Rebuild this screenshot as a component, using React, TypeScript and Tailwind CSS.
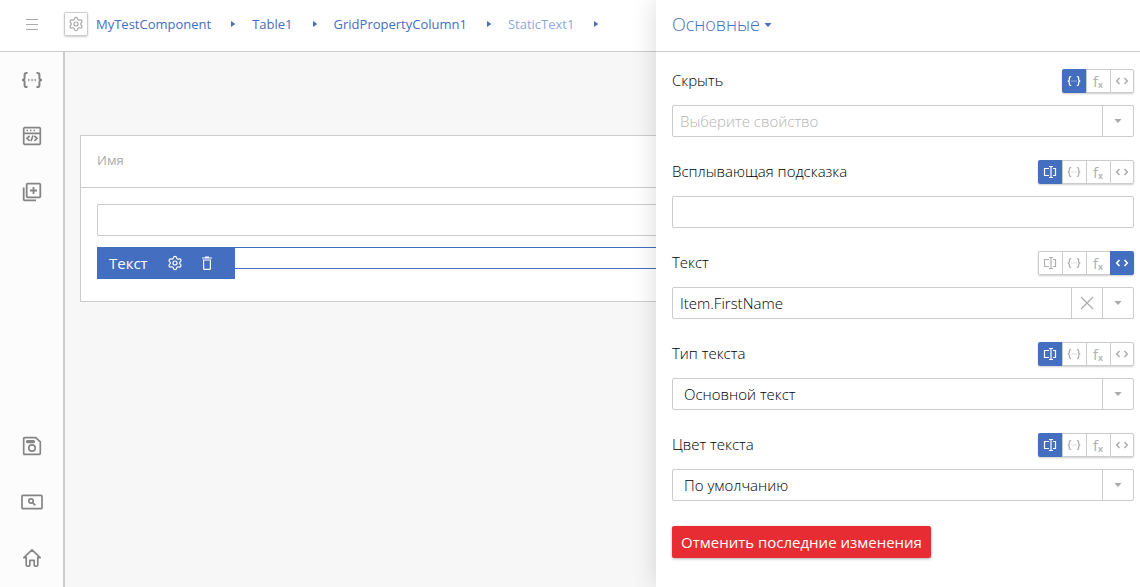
import { type ReactNode } from 'react';
import { Settings } from 'lucide-react';

type Mode = 'value' | 'property' | 'function' | 'code';

function BracesIcon({ className }: { className: string }) {
  return (
    <svg viewBox="0 0 22 16" className={className} fill="none" stroke="currentColor" strokeWidth="2" aria-hidden="true">
      <path d="M6.5 1H5.4Q3.6 1 3.6 2.8v2.9Q3.6 8 1 8q2.6 0 2.6 2.3v2.9Q3.6 15 5.4 15h1.1" />
      <path d="M15.5 1h1.1q1.8 0 1.8 1.8v2.9Q18.4 8 21 8q-2.6 0-2.6 2.3v2.9q0 1.8-1.8 1.8h-1.1" />
      <path d="M7 8h1.5M10.300 8h1.500M13.500 8H15" strokeWidth="1.400" />
    </svg>
  );
}

function ValueIcon() {
  return (
    <svg viewBox="0 0 14 14" className="h-3.5 w-3.5" fill="none" stroke="currentColor" strokeWidth="1.200" aria-hidden="true">
      <path d="M6 3.5H1.500v7H6M10 3.5h2.500v7H10" />
      <path d="M6 1.500h4M6 12.500h4M8 1.500v11" />
    </svg>
  );
}

function CodeIcon() {
  return (
    <svg viewBox="0 0 14 8" className="h-2 w-3.5" fill="none" stroke="currentColor" strokeWidth="1.600" aria-hidden="true">
      <path d="M4.500 1 1.700 4l2.800 3M9.500 1l2.800 3-2.800 3" />
    </svg>
  );
}

function FunctionIcon() {
  return (
    <span className="flex items-end leading-none font-normal">
      <span className="text-[15px] leading-none">f</span>
      <span className="text-[9px] leading-none font-semibold">x</span>
    </span>
  );
}

const modes: { id: Mode; title: string; icon: ReactNode }[] = [
  { id: 'value', title: 'Значение', icon: <ValueIcon /> },
  { id: 'property', title: 'Свойство', icon: <BracesIcon className="h-2.5 w-3.5" /> },
  { id: 'function', title: 'Функция', icon: <FunctionIcon /> },
  { id: 'code', title: 'Выражение', icon: <CodeIcon /> },
];

function ModeSwitch({ active, withValue = true }: { active: Mode; withValue?: boolean }) {
  return (
    <div role="group" className="flex rounded-[2px] shadow-[0_1px_2px_rgba(0,0,0,0.2)]">
      {modes
        .filter((m) => withValue || m.id !== 'value')
        .map((m) => (
          <button
            key={m.id}
            type="button"
            aria-label={m.title}
            aria-pressed={m.id === active}
            className={
              m.id === active
                ? 'flex h-6 w-6 items-center justify-center bg-[#446ebf] text-white first:rounded-l-[2px] last:rounded-r-[2px]'
                : 'flex h-6 w-6 items-center justify-center border-y border-l border-[#ccc] bg-white pr-px text-[#b0b0b0] first:rounded-l-[2px] last:rounded-r-[2px] last:border-r last:pr-0'
            }
          >
            {m.icon}
          </button>
        ))}
    </div>
  );
}

function DownArrow() {
  return (
    <svg viewBox="0 0 8 4" className="h-1 w-2" fill="currentColor" aria-hidden="true">
      <path d="M0.500 0h7L4.600 3.500q-.6.600-1.200 0z" />
    </svg>
  );
}

function Field({ id, label, active, withValue, children }: {
  id: string;
  label: string;
  active: Mode;
  withValue?: boolean;
  children: ReactNode;
}) {
  return (
    <div className="flex flex-col gap-3">
      <div className="flex h-6 items-center justify-between">
        <label htmlFor={id} className="pb-0.5">{label}</label>
        <ModeSwitch active={active} withValue={withValue} />
      </div>
      <div className="flex h-8 rounded-[2px] border border-[#ccc] bg-white">{children}</div>
    </div>
  );
}

const sideButton = 'flex w-[31px] shrink-0 items-center justify-center border-l border-[#ccc] text-[#aaa]';
const textInput = 'min-w-0 flex-1 bg-transparent px-[7px] outline-none placeholder:text-[#b4b4b4]';

function SelectBox({ id, value }: { id: string; value: string }) {
  return (
    <div className="grid flex-1 grid-cols-[1fr_31px]">
      <select id={id} className="col-span-2 col-start-1 row-start-1 appearance-none bg-transparent pl-[11px] outline-none">
        <option>{value}</option>
      </select>
      <span className="pointer-events-none col-start-2 row-start-1 flex items-center justify-center border-l border-[#ccc] text-[#aaa]">
        <DownArrow />
      </span>
    </div>
  );
}

function PropertiesPanel() {
  return (
    <aside className="z-10 flex w-[484px] shrink-0 flex-col bg-white shadow-[0_0_24px_rgba(0,0,0,0.15)]">
      <div className="flex h-13 items-center border-b border-[#ccc] px-4 pb-[3px]">
        <button type="button" className="flex items-center gap-1 text-lg font-[350] text-[#446ebf]">
          Основные
          <span className="pt-0.5"><DownArrow /></span>
        </button>
      </div>
      <form className="flex flex-col gap-[23px] pt-[17px] pr-1.5 pb-4 pl-4 text-[15px] font-[350]">
        <Field id="hide" label="Скрыть" active="property" withValue={false}>
          <input id="hide" placeholder="Выберите свойство" className={textInput} />
          <button type="button" aria-label="Открыть список" className={sideButton}><DownArrow /></button>
        </Field>
        <Field id="tooltip" label="Всплывающая подсказка" active="value">
          <input id="tooltip" className={textInput} />
        </Field>
        <Field id="text" label="Текст" active="code">
          <input id="text" defaultValue="Item.FirstName" className={textInput} />
          <button type="button" aria-label="Очистить" className={sideButton}>
            <svg viewBox="0 0 14 14" className="h-3.5 w-3.5" stroke="currentColor" strokeWidth="1.200" aria-hidden="true">
              <path d="m1 1 12 12M13 1 1 13" />
            </svg>
          </button>
          <button type="button" aria-label="Открыть список" className={sideButton}><DownArrow /></button>
        </Field>
        <Field id="type" label="Тип текста" active="value">
          <SelectBox id="type" value="Основной текст" />
        </Field>
        <Field id="color" label="Цвет текста" active="value">
          <SelectBox id="color" value="По умолчанию" />
        </Field>
        <button type="button" className="mt-0.5 flex h-8 items-center self-start rounded-[2px] bg-[#e72d33] px-[9px] font-normal text-white shadow-[0_1px_3px_rgba(0,0,0,0.3)]">
          Отменить последние изменения
        </button>
      </form>
    </aside>
  );
}

function NavButton({ label, children }: { label: string; children: ReactNode }) {
  return (
    <button type="button" aria-label={label} className="flex h-14 w-full items-center justify-center">
      {children}
    </button>
  );
}

function Sidebar() {
  const icon = 'h-5 w-5';
  return (
    <nav className="flex w-[65px] shrink-0 flex-col border-r-2 border-[#ccc] bg-[#fcfcfc] pb-px text-[#858585]">
      <NavButton label="Свойства"><BracesIcon className="h-4 w-[22px]" /></NavButton>
      <NavButton label="Код">
        <svg viewBox="0 0 20 20" className={icon} fill="none" stroke="currentColor" strokeWidth="1.700" aria-hidden="true">
          <rect x="1.700" y="1.700" width="16.600" height="16.600" rx="1" />
          <path d="M2 7.300h16M7.600 9.800 5 12.300l2.600 2.500M12.400 9.800l2.600 2.500-2.600 2.500M11 9.500l-2 5.600" />
          <path d="M4.500 4.500H6M8 4.500h1.500M11.500 4.500H13" />
        </svg>
      </NavButton>
      <NavButton label="Добавить">
        <svg viewBox="0 0 20 20" className={icon} fill="none" stroke="currentColor" strokeWidth="1.800" aria-hidden="true">
          <rect x="4.700" y="1.700" width="13.600" height="13.600" rx="1" />
          <path d="M1.700 5.500v11.800q0 1 1 1H14M11.500 5v7M8 8.500h7" />
        </svg>
      </NavButton>
      <div className="mt-auto">
        <NavButton label="Сохранить">
          <svg viewBox="0 0 20 20" className={icon} fill="none" stroke="currentColor" strokeWidth="1.700" aria-hidden="true">
            <path d="M2.700 1.700h11l4.600 4.200v11.400q0 1-1 1H2.700q-1 0-1-1V2.700q0-1 1-1z" />
            <circle cx="10" cy="12" r="3.200" />
            <path d="M5.500 5.700h6" strokeWidth="3.200" strokeLinecap="round" />
          </svg>
        </NavButton>
        <NavButton label="Просмотр">
          <svg viewBox="0 0 22 16" className="h-4 w-[22px]" fill="none" stroke="currentColor" strokeWidth="1.700" aria-hidden="true">
            <rect x="1" y="1.300" width="20" height="13.400" rx="1" />
            <circle cx="10" cy="7" r="2.200" />
            <path d="m11.800 8.800 2.600 2.600" />
          </svg>
        </NavButton>
        <NavButton label="Главная">
          <svg viewBox="0 0 20 20" className={icon} fill="none" stroke="currentColor" strokeWidth="1.700" strokeLinejoin="round" aria-hidden="true">
            <path d="M10 1.800 1.800 9.600h2.400v7.200q0 1.400 1.400 1.400h1.100q1.100 0 1.100-1.200v-4.600h4.400V17q0 1.200 1.100 1.200h1.100q1.400 0 1.400-1.400V9.600h2.400z" />
          </svg>
        </NavButton>
      </div>
    </nav>
  );
}

const crumbs = ['MyTestComponent', 'Table1', 'GridPropertyColumn1', 'StaticText1'];

function TopBar() {
  return (
    <header className="flex h-13 shrink-0 items-center overflow-hidden border-b border-[#ccc] bg-white pb-[3px]">
      <button type="button" aria-label="Меню" className="flex w-16 shrink-0 justify-center text-[#aaa]">
        <svg viewBox="0 0 12 11" className="h-[11px] w-3" stroke="currentColor" aria-hidden="true">
          <path d="M0 .5h12M0 5.500h12M0 10.500h12" />
        </svg>
      </button>
      <button type="button" aria-label="Настройки" className="flex h-6 w-6 shrink-0 items-center justify-center rounded-[2px] border border-[#ccc] text-[#aaa] shadow-[0_1px_2px_rgba(0,0,0,0.2)]">
        <Settings size={16} strokeWidth={1.8} />
      </button>
      <nav className="ml-2 flex text-[13px] text-[#446ebf]">
        {crumbs.map((name, i) => (
          <span key={name} className="flex items-center">
            <a href="#" className={i === crumbs.length - 1 ? 'pt-px opacity-60' : 'pt-px'}>{name}</a>
            <svg viewBox="0 0 4 6" className="mr-[17px] ml-5 h-1.5 w-1" fill="currentColor" aria-hidden="true">
              <path d="M0 0v6l3.600-2.600q.5-.4 0-.8z" />
            </svg>
          </span>
        ))}
      </nav>
    </header>
  );
}

function Canvas() {
  return (
    <main className="min-w-0 flex-1 bg-[#f7f7f7] pt-[83px] pl-[15px]">
      <section className="border-y border-l border-[#ccc] bg-white">
        <div className="flex h-13 items-center border-b border-[#ccc] px-4 pb-0.5 text-[13px] text-[#aaa]">Имя</div>
        <div className="flex flex-col gap-[11px] pt-4 pb-[22px] pl-4">
          <input aria-label="Имя" className="h-8 rounded-l-[2px] border-y border-l border-[#ccc] px-2 outline-none" />
          <div className="flex items-start">
            <div className="flex h-8 w-[138px] items-center bg-[#446ebf] pl-3 text-[15px] text-white">
              <span className="flex-1">Текст</span>
              <button type="button" aria-label="Настройки" className="flex w-8 justify-center"><Settings size={16} strokeWidth={1.800} /></button>
              <button type="button" aria-label="Удалить" className="mr-3 flex w-8 justify-center">
                <svg viewBox="0 0 10 14" className="h-3.5 w-2.5" fill="none" stroke="currentColor" strokeWidth="1.200" aria-hidden="true">
                  <path d="M0 2h10M3 1h4M1.600 4v8.400q0 1 1 1h4.800q1 0 1-1V4z" />
                </svg>
              </button>
            </div>
            <div className="h-[22px] flex-1 border-y border-[#446ebf]" />
          </div>
        </div>
      </section>
    </main>
  );
}

export default function App() {
  return (
    <div className="flex min-h-screen overflow-hidden bg-white font-['Open_Sans',sans-serif] text-black">
      <div className="flex min-w-0 flex-1 flex-col">
        <TopBar />
        <div className="flex flex-1">
          <Sidebar />
          <Canvas />
        </div>
      </div>
      <PropertiesPanel />
    </div>
  );
}
